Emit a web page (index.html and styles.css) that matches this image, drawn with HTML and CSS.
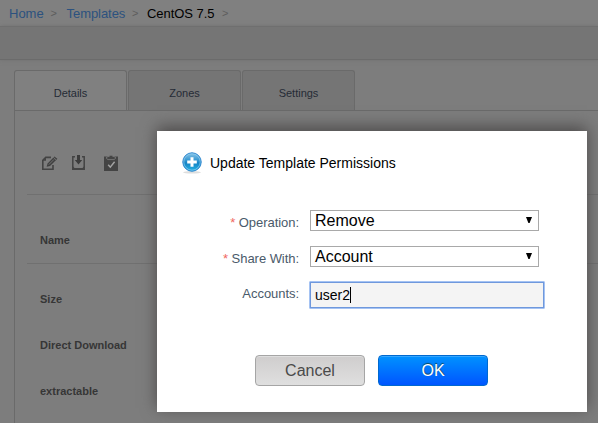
FILE: index.html
```html
<!DOCTYPE html>
<html lang="en">
<head>
<meta charset="utf-8">
<title>Templates - CentOS 7.5</title>
<link rel="stylesheet" href="styles.css">
</head>
<body>
<nav class="breadcrumbs">
  <a class="crumb home">Home</a><span class="sep">&gt;</span>
  <a class="crumb templates">Templates</a><span class="sep">&gt;</span>
  <span class="crumb current">CentOS 7.5</span><span class="sep">&gt;</span>
</nav>
<div class="toolbar"></div>
<main class="view">
  <div class="tabs">
    <div class="tab active">Details</div>
    <div class="tab">Zones</div>
    <div class="tab">Settings</div>
  </div>
  <section class="panel">
    <div class="actions">
      <svg class="icon" width="18" height="18" viewBox="0 0 18 18">
        <path d="M11 3.4H5.8L2.8 6.4V15.2H13V11" fill="none" stroke="#444" stroke-width="1.6"/>
        <path d="M6 3.4V6.8H2.8Z" fill="#444"/>
        <path d="M6.6 12.8L7.6 9.4L14.4 2.6L17.4 4.8L10 12Z" fill="#404040"/>
        <path d="M8.8 10.6L14 5.4M13.4 3.4L16 5.8" stroke="#7d7d7d" stroke-width=".8"/>
      </svg>
      <svg class="icon" width="18" height="18" viewBox="0 0 18 18">
        <path d="M5 2.8H2.8V15.2H14.2V2.8H12" fill="none" stroke="#444" stroke-width="1.5"/>
        <path d="M2.5 12V15.8H14.5V12L12.5 14H4.5Z" fill="#444"/>
        <path d="M7 1H10V6H12.2L8.5 10.6L4.8 6H7Z" fill="#3c3c3c"/>
      </svg>
      <svg class="icon" width="18" height="18" viewBox="0 0 18 18">
        <path d="M2 2.5H16V17H2Z" fill="#444"/>
        <path d="M4.6 3L7 2.4Q9 -.4 11 2.4L13.4 3V4.6L12 5.6H6L4.6 4.6Z" fill="#444" stroke="#7d7d7d" stroke-width=".8"/>
        <path d="M6.2 10.8L8.3 13.2L12.6 7.8" fill="none" stroke="#a2a2a2" stroke-width="1.5"/>
      </svg>
    </div>
    <div class="row name">Name</div>
    <div class="row">Size</div>
    <div class="row">Direct Download</div>
    <div class="row">extractable</div>
  </section>
</main>
<div class="dialog">
  <header class="title">
    <svg width="20" height="22" viewBox="0 0 20 22">
      <defs>
        <linearGradient id="ball" x1="0" y1="0" x2="0" y2="1">
          <stop offset="0" stop-color="#8bc5e8"/><stop offset=".45" stop-color="#2b92cf"/>
          <stop offset=".55" stop-color="#1583c5"/><stop offset="1" stop-color="#27b4e5"/>
        </linearGradient>
      </defs>
      <ellipse cx="10" cy="20.3" rx="9" ry="1.3" fill="#dedede"/>
      <circle cx="10" cy="10" r="9.2" fill="url(#ball)" stroke="#2681cd" stroke-width="1"/>
      <circle cx="10" cy="10" r="8.2" fill="none" stroke="#8fcdec" stroke-width=".7"/>
      <path d="M8.5 5.2H11.5V8.5H14.8V11.5H11.5V14.8H8.5V11.5H5.2V8.5H8.5Z" fill="#fff"/>
    </svg>
    <span class="title-text">Update Template Permissions</span>
  </header>
  <form class="fields">
    <div class="field">
      <label><span class="required">*</span> Operation:</label>
      <div class="select"><span>Remove</span><svg width="6" height="6" viewBox="0 0 6 6"><path d="M0 0H6L3.6 6H2.4Z"/></svg></div>
    </div>
    <div class="field">
      <label><span class="required">*</span> Share With:</label>
      <div class="select"><span>Account</span><svg width="6" height="6" viewBox="0 0 6 6"><path d="M0 0H6L3.6 6H2.4Z"/></svg></div>
    </div>
    <div class="field last">
      <label>Accounts:</label>
      <div class="input"><span>user2</span><i class="caret"></i></div>
    </div>
  </form>
  <footer class="buttons">
    <div class="button cancel">Cancel</div>
    <div class="button ok">OK</div>
  </footer>
</div>
</body>
</html>
```
FILE: styles.css
```css
* { box-sizing: border-box; }
html, body { height: 100%; }
body {
  margin: 0;
  overflow: hidden;
  position: relative;
  background: #7d7d7d;
  font-family: "Liberation Sans", Arial, sans-serif;
  display: flex;
  flex-direction: column;
}
.breadcrumbs {
  height: 26px;
  flex: none;
  display: flex;
  padding-left: 9px;
  background: #808080;
  font-size: 13px;
  line-height: 27px;
  white-space: nowrap;
}
.crumb { color: #2c527f; }
.crumb.home { width: 34.5px; }
.crumb.templates { width: 58.5px; letter-spacing: -.05px; }
.crumb.current { width: 68px; color: #000; letter-spacing: -.05px; }
.sep { width: 23px; padding-left: 7px; font-size: 11px; color: #5d5d5d; }
.sep + .crumb.current { margin-left: -1px; }
.toolbar {
  height: 34px;
  flex: none;
  background: #757575;
  border-top: 1px solid #6f6f6f;
  border-bottom: 1px solid #6b6b6b;
  box-shadow: 0 0 4px #707070;
}
.view { flex: 1; padding: 10px 0 0 14px; min-height: 0; display: flex; flex-direction: column; }
.tabs { display: flex; gap: 1px; height: 40px; flex: none; }
.tab {
  width: 113px;
  border: 1px solid #6a6a6a;
  border-bottom: 0;
  border-radius: 3px 3px 0 0;
  background: #757575;
  color: #252b35;
  font-size: 11px;
  line-height: 45px;
  text-align: center;
}
.tab.active { background: #808080; }
.panel {
  flex: 1;
  border-top: 1px solid #6a6a6a;
  border-left: 1px solid #6a6a6a;
  padding-left: 12px;
}
.actions { height: 84px; border-bottom: 1px solid #707070; display: flex; padding: 43px 0 0 13px; }
.icon { margin-right: 12px; }
.icon + .icon { margin-right: 14px; }
.row { height: 46px; padding-left: 13px; font-size: 11px; font-weight: bold; color: #363636; line-height: 47px; }
.row.name { height: 69px; line-height: 91px; border-bottom: 1px solid #707070; margin-bottom: 12px; }
.dialog {
  position: absolute;
  left: 157px;
  top: 131px;
  width: 430px;
  height: 281px;
  background: #fff;
  box-shadow: 0 -4px 15px #4c4a4a;
}
.title { display: flex; align-items: center; height: 22px; margin: 21px 0 0 25px; font-size: 14px; color: #000; }
.title-text { margin-left: 8px; line-height: 22px; white-space: nowrap; }
.fields { margin: 36px 0 0; }
.field { display: flex; height: 36px; }
.field label { width: 142px; margin-right: 11px; text-align: right; color: #4a5a6a; font-size: 13px; letter-spacing: -.05px; line-height: 25px; white-space: nowrap; }
.field.last label { line-height: 24px; }
.required { color: #f0685f; }
.select {
  width: 229px;
  height: 21px;
  border: 1px solid #a9a9a9;
  padding: 0 6px 0 4px;
  display: flex;
  align-items: center;
  justify-content: space-between;
  font-size: 16px;
  line-height: 19px;
}
.select svg { margin-top: -1px; }
.input {
  width: 236px;
  height: 28px;
  margin: -1px 0 0 -1px;
  border: 1px solid #a5c3f3;
  box-shadow: inset 0 0 0 1px #6f98dc;
  border-radius: 1px;
  background: #f4f4f4;
  padding-left: 5px;
  display: flex;
  align-items: center;
  font-size: 14px;
}
.caret { width: 1px; height: 16px; background: #000; }
.buttons { display: flex; gap: 13px; margin: 37px 0 0 98px; }
.button {
  width: 110px;
  height: 31px;
  border: 1px solid #a5a5a5;
  border-radius: 4px;
  font-size: 16px;
  line-height: 29px;
  text-align: center;
}
.cancel { background: linear-gradient(#cfcdcd, #dfdfdf); color: #4a4a4a; box-shadow: inset 0 1px #dedede; }
.ok { background: linear-gradient(#0092ff, #0055ff); border-color: #0069cf; color: #fff; text-shadow: 0 -1px 1px #0f464e; box-shadow: inset 0 1px #36a6ff; }
```
